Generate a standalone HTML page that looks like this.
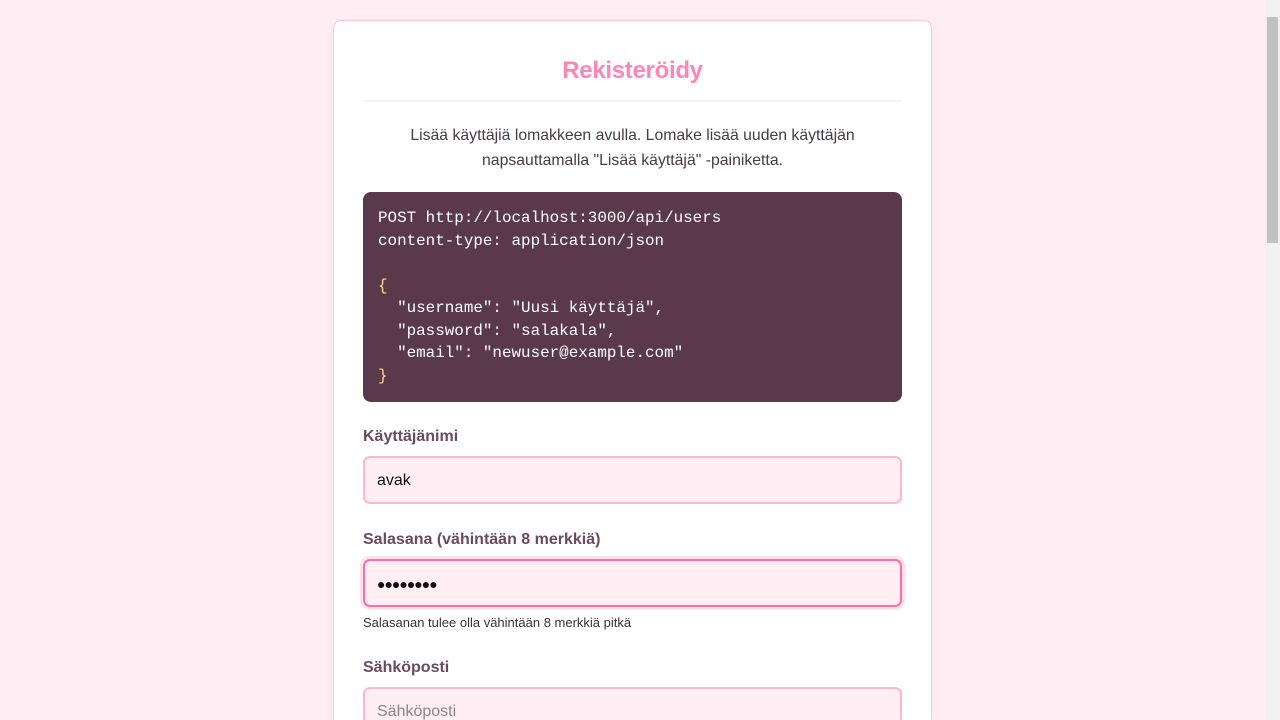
<!DOCTYPE html>
<html><head><meta charset="utf-8"><style>
*{box-sizing:border-box;margin:0;padding:0}
html,body{width:1280px;height:720px;overflow:hidden}
body{background:#ffeef4;font-family:"Liberation Sans",sans-serif;position:relative}
.card{position:absolute;left:333px;top:20px;width:599px;height:700px;overflow:hidden;background:#fff;border:1px solid #ffc6da;border-bottom:none;border-radius:8px 8px 0 0;box-shadow:0 2px 10px rgba(255,150,190,.15)}
h1{position:absolute;left:30px;right:30px;top:35px;line-height:30px;text-align:center;color:#ff85b5;font-size:24px;font-weight:bold;letter-spacing:-0.3px}
.hr{position:absolute;left:29px;width:539px;top:79px;height:2px;background:#ffeef4}
p{position:absolute;left:29px;width:539px;top:102px;text-align:center;color:#4a3a44;font-size:15.8px;line-height:25px}
pre{position:absolute;left:29px;width:539px;top:171px;height:210px;background:#5a3a4a;border-radius:8px;padding:15px 15px;color:#fff;font-family:"Liberation Mono",monospace;font-size:15.9px;line-height:22.5px}
.y{color:#ffd98a}
label{position:absolute;left:29px;color:#6b4a5e;font-size:16px;font-weight:bold}
.in{position:absolute;left:29px;width:539px;height:48px;background:#ffeef4;border:2px solid #ffb6d0;border-radius:7px;padding-left:12px;font-size:16px;line-height:46px;color:#111}
.focus{border-color:#ff6ea5;box-shadow:0 0 0 3px #ffe0ec}
.hint{position:absolute;left:29px;top:594px;font-size:13px;color:#333}
.sb{position:absolute;right:0;top:0;width:15px;height:720px;background:#f1f1f1}
.th{position:absolute;right:2px;top:17px;width:11px;height:226px;background:#c1c1c1}
</style></head><body>
<div class="card">
<h1>Rekisteröidy</h1>
<div class="hr"></div>
<p>Lisää käyttäjiä lomakkeen avulla. Lomake lisää uuden käyttäjän<br>napsauttamalla "Lisää käyttäjä" -painiketta.</p>
<pre>POST http://localhost:3000/api/users
content-type: application/json

<span class="y">{</span>
  "username": "Uusi käyttäjä",
  "password": "salakala",
  "email": "newuser@example.com"
<span class="y">}</span></pre>
<label style="top:407px">Käyttäjänimi</label>
<div class="in" style="top:435px">avak</div>
<label style="top:510px">Salasana (vähintään 8 merkkiä)</label>
<div class="in focus" style="top:538px;font-size:14px;letter-spacing:-1px">●●●●●●●●</div>
<div class="hint">Salasanan tulee olla vähintään 8 merkkiä pitkä</div>
<label style="top:638px">Sähköposti</label>
<div class="in" style="top:666px;color:#888">Sähköposti</div>
</div>
<div class="sb"><div class="th"></div></div>
</body></html>
